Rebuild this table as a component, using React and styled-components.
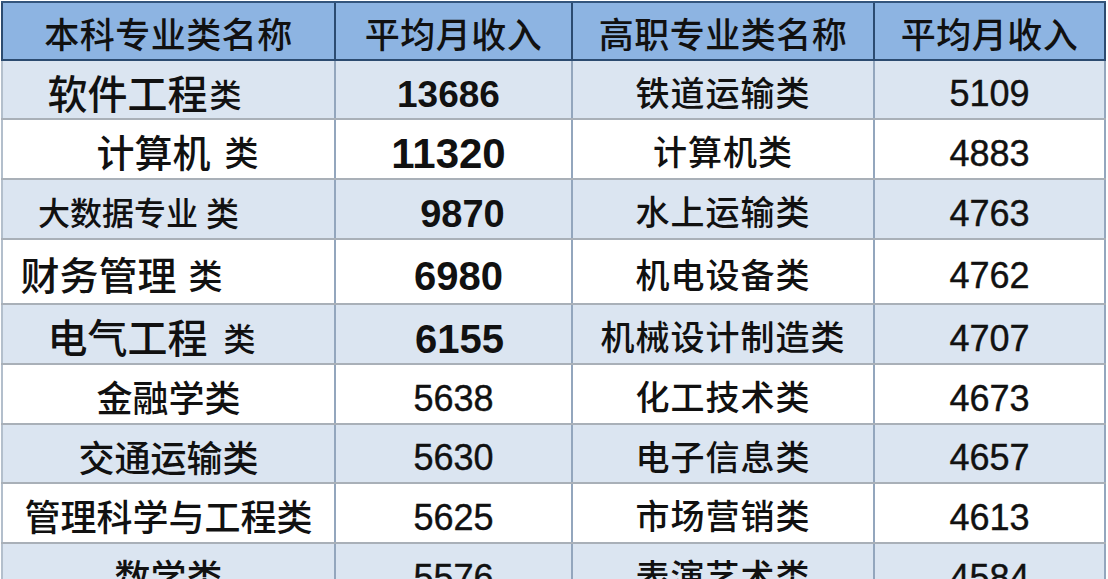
import React from 'react';
import styled, { createGlobalStyle } from 'styled-components';

const GlobalStyle = createGlobalStyle`
  html, body {
    margin: 0;
    padding: 0;
    background: #ffffff;
    overflow: hidden;
  }
  * {
    box-sizing: border-box;
  }
`;

const Sheet = styled.div`
  margin: 1px 0 0 1px;
  width: 1105px;
  font-family: "Noto Sans CJK SC", "Noto Sans", sans-serif;
  color: #111111;
`;

const Row = styled.div`
  display: grid;
  grid-template-columns: 335px 237px 302px 231px;
  height: ${(p) => p.h}px;
  background: ${(p) => (p.head ? '#8db4e2' : p.alt ? '#dbe5f1' : '#ffffff')};
  border-top: ${(p) => (p.head ? '2px solid #34557c' : 'none')};
  border-bottom: 2px solid ${(p) => (p.head ? '#2c4b70' : '#a9b0b8')};
`;

const Cell = styled.div`
  display: flex;
  align-items: center;
  justify-content: center;
  padding-left: ${(p) => (p.shift > 0 ? p.shift * 2 : 0)}px;
  padding-right: ${(p) => (p.shift < 0 ? -p.shift * 2 : 0)}px;
  border-right: 2px solid ${(p) => (p.head ? '#2c4b70' : '#93a6bd')};
  border-left: ${(p) => (p.first ? `2px solid ${p.head ? '#2c4b70' : '#b3bfcc'}` : 'none')};
  white-space: nowrap;
  line-height: 1;
`;

const HeadText = styled.span`
  font-size: 35px;
  font-weight: 500;
  letter-spacing: 0.5px;
  padding-top: 2px;
`;

const Name = styled.span`
  font-size: ${(p) => p.size}px;
  font-weight: 500;
  padding-top: 4px;
`;

const Suffix = styled.span`
  font-size: ${(p) => p.size}px;
  font-weight: 500;
  margin-left: ${(p) => p.gap}px;
  padding-top: 6px;
`;

const Major = styled.span`
  font-size: 34px;
  font-weight: 500;
  letter-spacing: 1px;
  padding-top: 4px;
`;

const Num = styled.span`
  font-family: "Liberation Sans", Arial, sans-serif;
  font-size: ${(p) => p.size || 36}px;
  font-weight: ${(p) => (p.bold ? 700 : 400)};
  padding-top: 9px;
  -webkit-text-stroke: ${(p) => (p.bold ? '0' : '0.4px #111')};
`;

const rows = [
  { h: 59, name: '软件工程', ns: 40, suf: '类', ss: 32, gap: 2, s1: -24, num: '13686', size: 37, bold: true, s2: -5, major: '铁道运输类', pay: '5109' },
  { h: 60, name: '计算机', ns: 38, suf: '类', ss: 34, gap: 14, s1: 9, num: '11320', size: 42, bold: true, s2: -5, major: '计算机类', pay: '4883' },
  { h: 60, name: '大数据专业', ns: 32, suf: '类', ss: 33, gap: 8, s1: -30, num: '9870', size: 38, bold: true, s2: 9, major: '水上运输类', pay: '4763' },
  { h: 65, name: '财务管理', ns: 39, suf: '类', ss: 34, gap: 12, s1: -47, num: '6980', size: 40, bold: true, s2: 5, major: '机电设备类', pay: '4762' },
  { h: 60, name: '电气工程', ns: 40, suf: '类', ss: 32, gap: 16, s1: -17, num: '6155', size: 40, bold: true, s2: 6, major: '机械设计制造类', pay: '4707' },
  { h: 60, name: '金融学类', ns: 36, s1: 0, num: '5638', s2: 0, major: '化工技术类', pay: '4673' },
  { h: 59, name: '交通运输类', ns: 36, s1: 0, num: '5630', s2: 0, major: '电子信息类', pay: '4657' },
  { h: 60, name: '管理科学与工程类', ns: 36, s1: 0, num: '5625', s2: 0, major: '市场营销类', pay: '4613' },
  { h: 60, name: '数学类', ns: 36, s1: 0, num: '5576', s2: 0, major: '表演艺术类', pay: '4584' },
];

export default function App() {
  return (
    <>
      <GlobalStyle />
      <Sheet>
        <Row head h={60}>
          <Cell head first><HeadText>本科专业类名称</HeadText></Cell>
          <Cell head><HeadText>平均月收入</HeadText></Cell>
          <Cell head><HeadText>高职专业类名称</HeadText></Cell>
          <Cell head><HeadText>平均月收入</HeadText></Cell>
        </Row>
        {rows.map((r, i) => (
          <Row key={r.num} h={r.h} alt={i % 2 === 0}>
            <Cell first shift={r.s1}>
              <Name size={r.ns}>{r.name}</Name>
              {r.suf && <Suffix size={r.ss} gap={r.gap}>{r.suf}</Suffix>}
            </Cell>
            <Cell shift={r.s2}>
              <Num size={r.size} bold={r.bold}>{r.num}</Num>
            </Cell>
            <Cell>
              <Major>{r.major}</Major>
            </Cell>
            <Cell>
              <Num>{r.pay}</Num>
            </Cell>
          </Row>
        ))}
      </Sheet>
    </>
  );
}
